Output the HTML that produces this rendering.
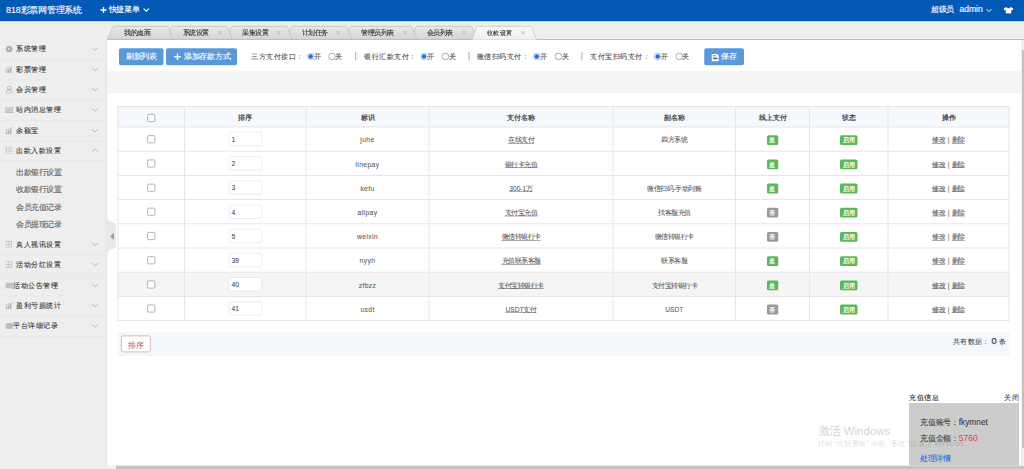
<!DOCTYPE html>
<html><head><meta charset="utf-8">
<style>
*{margin:0;padding:0;box-sizing:border-box}
html,body{width:4096px;height:1876px;overflow:hidden;background:#eeeeee;font-family:"Liberation Sans",sans-serif;color:#333;-webkit-text-stroke-width:0.48px}
.a{position:absolute;white-space:nowrap}
#hdr{left:0;top:0;width:4096px;height:84.8px;background:#0459b6;border-bottom:3.2px solid #034da2}
#hdrline{left:0;top:84.8px;width:4096px;height:8px;background:#e3f2fb}
.htxt{color:#fff}
#side{left:0;top:88px;width:428px;height:1788px;background:#eeeeee}
.sep2{left:0;width:416px;height:4px;background:#e8e8e8}
.sl{left:64px;font-size:29.8px;color:#3a3a3a;line-height:32px}
.sub{left:64px;font-size:30.2px;color:#666;line-height:32px}
#content{left:430.4px;top:160px;width:3653.6px;height:1704px;background:#fff}
#sstrip{left:418px;top:160px;width:12.4px;height:1704px;background:linear-gradient(90deg,#eee,#e6e6e6)}
.btn{background:#5a98dc;color:#fff;border-radius:8px;font-size:30.8px;line-height:68px;text-align:center}
.lbl{font-size:29.6px;color:#555;line-height:32px}
.radio{width:26.8px;height:26.8px;border-radius:50%;border:2.8px solid #888;background:#fff}
.radio.on{border:3.2px solid #5aa0f0;background:radial-gradient(circle,#1a73e0 0 58%,#fff 64%)}
.sep{width:5.2px;height:34px;background:#bbb}
#band{left:430px;top:284px;width:3656px;height:86px;background:#f5f5f5;border-bottom:3.2px solid #ededed}
table{position:absolute;left:470px;top:424px;border-collapse:collapse;table-layout:fixed;width:3564px}
td,th{border:4px solid #e6e6e6;text-align:center;font-size:26.4px;color:#555;font-weight:normal;padding:0}
td.tx{padding-top:8px}
th{height:82px;background:#f5f9fd;color:#333;font-weight:normal;font-size:27.6px;padding-top:8px;-webkit-text-stroke-width:0.8px}
td{-webkit-text-stroke-width:0.2px}
td{height:96.8px}
tr.hov td{background:#f5f5f5}
.cb{display:inline-block;width:32px;height:32px;border:3.2px solid #9a9a9a;border-radius:6px;background:#fff;vertical-align:middle}
.inp{display:inline-block;width:132px;height:56px;border:2.8px solid #dcdcdc;border-radius:6px;text-align:left;padding-left:8.8px;padding-top:3.2px;line-height:50px;font-size:27.2px;background:#fff;color:#444;vertical-align:middle}
.u{text-decoration:underline;color:#555;text-decoration-thickness:2.4px;text-underline-offset:4px}
.pipe{margin:0 10px;color:#555}
.bg{display:inline-block;background:#5cb85c;color:#fff;font-size:24.8px;-webkit-text-stroke-width:0.8px;line-height:39.2px;height:39.2px;border-radius:6px;padding:0 10px;vertical-align:middle}
.bg.no{background:#999}
#pg{left:472px;top:1328px;width:3566px;height:96px;background:#f3f8fc}
.tabt{font-size:26px;color:#333;line-height:28px}
.tabx{font-size:28px;color:#b8b8b8;line-height:28px}

td.lat{letter-spacing:1.4px;font-size:27.2px}

#root{position:absolute;left:0;top:0;width:4096px;height:1876px;transform:scale(0.25);transform-origin:0 0;overflow:hidden}
html,body{width:1024px!important;height:469px!important}
</style></head><body><div id="root">
<div class="a" id="hdr"></div>
<div class="a" id="hdrline"></div>
<div class="a htxt" style="left:24px;top:20px;font-size:35.2px;line-height:40px">818彩票网管理系统</div>
<svg class="a" style="left:400px;top:26px" width="28" height="28" viewBox="0 0 7 7"><path d="M3.5 0.5v6M0.5 3.5h6" stroke="#fff" stroke-width="1.4"/></svg>
<div class="a htxt" style="left:434.4px;top:19.2px;font-size:31.2px;line-height:36px">快捷菜单</div>
<svg class="a" style="left:572px;top:32px" width="26" height="16" viewBox="0 0 6.5 4"><path d="M0.6 0.6L3.25 3.2L5.9 0.6" fill="none" stroke="#fff" stroke-width="1.2"/></svg>
<div class="a htxt" style="left:3724px;top:20.8px;font-size:30px;line-height:36px">超级员</div>
<div class="a htxt" style="left:3838px;top:17.2px;font-size:34px;line-height:40px">admin</div>
<svg class="a" style="left:3944px;top:34px" width="24" height="16" viewBox="0 0 6 4"><path d="M0.5 0.5L3 3.2L5.5 0.5" fill="none" stroke="#fff" stroke-width="0.9"/></svg>
<svg class="a" style="left:4014px;top:27.2px" width="40" height="28" viewBox="0 0 10 7"><path d="M3 0.3L0.2 1.8L1 3.6L2.2 3.2V6.8H7.8V3.2L9 3.6L9.8 1.8L7 0.3C6.6 1.2 5.8 1.5 5 1.5C4.2 1.5 3.4 1.2 3 0.3Z" fill="#fff"/></svg>
<div class="a" id="side"></div>
<svg class="a" style="left:0;top:88px" width="4096" height="72" viewBox="0 0 1024 18">
<defs><linearGradient id="tg" x1="0" y1="0" x2="0" y2="1"><stop offset="0" stop-color="#e9e9e9"/><stop offset="1" stop-color="#d4d4d4"/></linearGradient>
<linearGradient id="ta" x1="0" y1="0" x2="0" y2="1"><stop offset="0" stop-color="#f7f7f7"/><stop offset="1" stop-color="#f0f0f0"/></linearGradient></defs>
<line x1="107" y1="17.5" x2="1024" y2="17.5" stroke="#bdbdbd" stroke-width="1"/>
<path d="M411 17.5L415.7 5.7Q416 4.3 417.5 4.3H470.5Q471.8 4.3 472.2 5.7L477 17.5Z" fill="url(#tg)" stroke="#bcbcbc" stroke-width="0.7"/>
<path d="M345 17.5L350 5.7Q350.3 4.3 351.8 4.3H410.5Q411.8 4.3 412.2 5.7L417 17.5Z" fill="url(#tg)" stroke="#bcbcbc" stroke-width="0.7"/>
<path d="M286 17.5L291 5.7Q291.3 4.3 292.8 4.3H345.5Q346.8 4.3 347.2 5.7L352 17.5Z" fill="url(#tg)" stroke="#bcbcbc" stroke-width="0.7"/>
<path d="M226 17.5L231 5.7Q231.3 4.3 232.8 4.3H286Q287.3 4.3 287.7 5.7L292.2 17.5Z" fill="url(#tg)" stroke="#bcbcbc" stroke-width="0.7"/>
<path d="M166 17.5L171 5.7Q171.3 4.3 172.8 4.3H226Q227.3 4.3 227.7 5.7L232.4 17.5Z" fill="url(#tg)" stroke="#bcbcbc" stroke-width="0.7"/>
<path d="M107.5 17.5L112.5 5.7Q112.8 4.3 114.3 4.3H167Q168.3 4.3 168.7 5.7L173 17.5Z" fill="url(#tg)" stroke="#bcbcbc" stroke-width="0.7"/>
<path d="M472 18L476.2 5.7Q476.5 4.3 478 4.3H530.3Q531.6 4.3 532 5.7L536.7 18Z" fill="url(#ta)" stroke="#c4c4c4" stroke-width="0.7"/>
</svg>
<div class="a tabt" style="left:496px;top:118px">我的桌面</div>
<div class="a tabt" style="left:730.4px;top:118px">系统设置</div><div class="a tabx" style="left:870px;top:116px">×</div>
<div class="a tabt" style="left:968px;top:118px">采集设置</div><div class="a tabx" style="left:1106px;top:116px">×</div>
<div class="a tabt" style="left:1206.4px;top:118px">计划任务</div><div class="a tabx" style="left:1344px;top:116px">×</div>
<div class="a tabt" style="left:1444px;top:118px">管理员列表</div><div class="a tabx" style="left:1612px;top:116px">×</div>
<div class="a tabt" style="left:1706.8px;top:118px">会员列表</div><div class="a tabx" style="left:1848px;top:116px">×</div>
<div class="a tabt" style="left:1948px;top:118.4px;color:#333;font-size:25.2px">收款设置</div><div class="a tabx" style="left:2083.2px;top:116px;color:#aaa;-webkit-text-stroke-width:0">×</div>
<div class="a sep2" style="top:236px"></div><svg class="a" style="left:22.4px;top:181.6px" width="28.8" height="28.8" viewBox="0 0 8 8"><g fill="#a8a8a8"><circle cx="4" cy="4" r="2.7"/><rect x="3.2" y="0" width="1.6" height="8"/><rect x="0" y="3.2" width="8" height="1.6"/><rect x="3.2" y="0" width="1.6" height="8" transform="rotate(45 4 4)"/><rect x="3.2" y="0" width="1.6" height="8" transform="rotate(-45 4 4)"/></g><circle cx="4" cy="4" r="1.1" fill="#eee"/></svg><div class="a sl" style="left:64px;top:178.8px">系统管理</div><svg class="a" style="left:366.4px;top:188px" width="28" height="16" viewBox="0 0 7 4"><path d="M0.6 0.6L3.5 3.3L6.4 0.6" fill="none" stroke="#aaa" stroke-width="0.85"/></svg><div class="a sep2" style="top:318px"></div><svg class="a" style="left:22.4px;top:262.8px" width="29.6" height="29.6" viewBox="0 0 8 8"><g fill="#b0b0b0"><rect x="0.3" y="5" width="1.6" height="3"/><rect x="2.5" y="3.8" width="1.6" height="4.2"/><rect x="4.7" y="2.6" width="1.6" height="5.4"/></g><path d="M0.5 4L3.5 2L5 3L7.6 0.4" fill="none" stroke="#a0a0a0" stroke-width="0.7"/></svg><div class="a sl" style="left:64px;top:260.8px">彩票管理</div><svg class="a" style="left:366.4px;top:270px" width="28" height="16" viewBox="0 0 7 4"><path d="M0.6 0.6L3.5 3.3L6.4 0.6" fill="none" stroke="#aaa" stroke-width="0.85"/></svg><div class="a sep2" style="top:398.4px"></div><svg class="a" style="left:23.2px;top:342.4px" width="28" height="32" viewBox="0 0 7 8"><circle cx="3.5" cy="2.4" r="1.9" fill="none" stroke="#a8a8a8" stroke-width="0.75"/><path d="M0.5 7.6v-1.3c0-1.1 1.3-1.9 3-1.9s3 0.8 3 1.9v1.3z" fill="none" stroke="#a8a8a8" stroke-width="0.75"/></svg><div class="a sl" style="left:64px;top:341.2px">会员管理</div><svg class="a" style="left:366.4px;top:350.4px" width="28" height="16" viewBox="0 0 7 4"><path d="M0.6 0.6L3.5 3.3L6.4 0.6" fill="none" stroke="#aaa" stroke-width="0.85"/></svg><div class="a sep2" style="top:480px"></div><svg class="a" style="left:21.2px;top:428.8px" width="32" height="23.2" viewBox="0 0 8 5.8"><rect x="0.35" y="0.35" width="7.3" height="5.1" fill="#d6d6d6" stroke="#a8a8a8" stroke-width="0.7"/><path d="M1.8 2.3h4.4M1.8 3.6h3" stroke="#a8a8a8" stroke-width="0.5"/></svg><div class="a sl" style="left:64px;top:422.8px">站内消息管理</div><svg class="a" style="left:366.4px;top:432px" width="28" height="16" viewBox="0 0 7 4"><path d="M0.6 0.6L3.5 3.3L6.4 0.6" fill="none" stroke="#aaa" stroke-width="0.85"/></svg><div class="a sep2" style="top:563.2px"></div><svg class="a" style="left:22.4px;top:508px" width="29.6" height="29.6" viewBox="0 0 8 8"><g fill="#b0b0b0"><rect x="0.3" y="5" width="1.6" height="3"/><rect x="2.5" y="3.8" width="1.6" height="4.2"/><rect x="4.7" y="2.6" width="1.6" height="5.4"/></g><path d="M0.5 4L3.5 2L5 3L7.6 0.4" fill="none" stroke="#a0a0a0" stroke-width="0.7"/></svg><div class="a sl" style="left:64px;top:506px">余额宝</div><svg class="a" style="left:366.4px;top:515.2px" width="28" height="16" viewBox="0 0 7 4"><path d="M0.6 0.6L3.5 3.3L6.4 0.6" fill="none" stroke="#aaa" stroke-width="0.85"/></svg><div class="a sep2" style="top:640.8px"></div><svg class="a" style="left:22.4px;top:585.6px" width="29.6" height="30.4" viewBox="0 0 7.4 7.6"><path d="M0.6 0v7.6" stroke="#a8a8a8" stroke-width="0.8"/><path d="M2.2 0.8h5M2.2 2.8h5M2.2 4.8h5M2.2 6.8h5" stroke="#b4b4b4" stroke-width="0.6"/></svg><div class="a sl" style="left:64px;top:583.6px">出款入款设置</div><svg class="a" style="left:366.4px;top:592.8px" width="28" height="16" viewBox="0 0 7 4"><path d="M0.6 3.4L3.5 0.7L6.4 3.4" fill="none" stroke="#aaa" stroke-width="0.85"/></svg><div class="a sep2" style="top:1016.8px"></div><svg class="a" style="left:22.4px;top:963.6px" width="26.4" height="26.4" viewBox="0 0 7 7"><rect x="0.4" y="0.4" width="6.2" height="6.2" fill="none" stroke="#b4b4b4" stroke-width="0.7"/><path d="M0.4 3.5h6.2M3.5 0.4v6.2" stroke="#b4b4b4" stroke-width="0.6"/></svg><div class="a sl" style="left:64px;top:959.6px">真人视讯设置</div><svg class="a" style="left:366.4px;top:968.8px" width="28" height="16" viewBox="0 0 7 4"><path d="M0.6 0.6L3.5 3.3L6.4 0.6" fill="none" stroke="#aaa" stroke-width="0.85"/></svg><div class="a sep2" style="top:1098.4px"></div><svg class="a" style="left:22.4px;top:1045.2px" width="26.4" height="26.4" viewBox="0 0 7 7"><rect x="0.4" y="0.4" width="6.2" height="6.2" fill="none" stroke="#b4b4b4" stroke-width="0.7"/><path d="M0.4 3.5h6.2M3.5 0.4v6.2" stroke="#b4b4b4" stroke-width="0.6"/></svg><div class="a sl" style="left:64px;top:1041.2px">活动分红设置</div><svg class="a" style="left:366.4px;top:1050.4px" width="28" height="16" viewBox="0 0 7 4"><path d="M0.6 0.6L3.5 3.3L6.4 0.6" fill="none" stroke="#aaa" stroke-width="0.85"/></svg><div class="a sep2" style="top:1182.4px"></div><svg class="a" style="left:22.4px;top:1130.4px" width="30.4" height="24" viewBox="0 0 7.6 6"><rect x="0" y="0" width="7.6" height="6" fill="#c4c4c4"/><path d="M0 2h7.6M0 4h7.6" stroke="#b0b0b0" stroke-width="0.5"/></svg><div class="a sl" style="left:53.2px;top:1125.2px">活动公告管理</div><svg class="a" style="left:366.4px;top:1134.4px" width="28" height="16" viewBox="0 0 7 4"><path d="M0.6 0.6L3.5 3.3L6.4 0.6" fill="none" stroke="#aaa" stroke-width="0.85"/></svg><div class="a sep2" style="top:1262.4px"></div><svg class="a" style="left:22.4px;top:1207.2px" width="29.6" height="29.6" viewBox="0 0 8 8"><g fill="#b0b0b0"><rect x="0.3" y="5" width="1.6" height="3"/><rect x="2.5" y="3.8" width="1.6" height="4.2"/><rect x="4.7" y="2.6" width="1.6" height="5.4"/></g><path d="M0.5 4L3.5 2L5 3L7.6 0.4" fill="none" stroke="#a0a0a0" stroke-width="0.7"/></svg><div class="a sl" style="left:64px;top:1205.2px">盈利亏损统计</div><svg class="a" style="left:366.4px;top:1214.4px" width="28" height="16" viewBox="0 0 7 4"><path d="M0.6 0.6L3.5 3.3L6.4 0.6" fill="none" stroke="#aaa" stroke-width="0.85"/></svg><div class="a sep2" style="top:1344px"></div><svg class="a" style="left:22.4px;top:1292px" width="30.4" height="24" viewBox="0 0 7.6 6"><rect x="0" y="0" width="7.6" height="6" fill="#c4c4c4"/><path d="M0 2h7.6M0 4h7.6" stroke="#b0b0b0" stroke-width="0.5"/></svg><div class="a sl" style="left:53.2px;top:1286.8px">平台详细记录</div><svg class="a" style="left:366.4px;top:1296px" width="28" height="16" viewBox="0 0 7 4"><path d="M0.6 0.6L3.5 3.3L6.4 0.6" fill="none" stroke="#aaa" stroke-width="0.85"/></svg><div class="a sub" style="top:672.8px">出款银行设置</div><div class="a sub" style="top:743.2px">收款银行设置</div><div class="a sub" style="top:812.8px">会员充值记录</div><div class="a sub" style="top:880.8px">会员提现记录</div><div class="a" id="sstrip"></div><div class="a" id="content"></div>
<div class="a btn" style="left:476px;top:193.2px;width:178.4px;height:68px">刷新列表</div>
<div class="a btn" style="left:664px;top:193.2px;width:284px;height:68px"></div>
<svg class="a" style="left:696px;top:213.2px" width="28" height="28" viewBox="0 0 7 7"><path d="M3.5 0.3v6.4M0.3 3.5h6.4" stroke="#fff" stroke-width="1.3"/></svg>
<div class="a btn" style="left:735.2px;top:193.2px;height:68px;background:none">添加存款方式</div>
<div class="a lbl" style="left:1004px;top:208.4px">三方支付接口：</div>
<svg class="a" style="left:1228px;top:211.2px" width="29.6" height="29.6" viewBox="0 0 7 7"><circle cx="3.5" cy="3.5" r="3.15" fill="#fff" stroke="#7fb6f2" stroke-width="0.7"/><circle cx="3.5" cy="3.5" r="2.1" fill="#1a70dc"/></svg>
<div class="a lbl" style="left:1254.8px;top:208.4px">开</div>
<svg class="a" style="left:1312.8px;top:211.2px" width="29.6" height="29.6" viewBox="0 0 7 7"><circle cx="3.5" cy="3.5" r="3.15" fill="#fff" stroke="#8a8a8a" stroke-width="0.7"/></svg>
<div class="a lbl" style="left:1340.8px;top:208.4px">关</div>
<div class="a sep" style="left:1420px;top:208px"></div>
<div class="a lbl" style="left:1456px;top:208.4px">银行汇款支付：</div>
<svg class="a" style="left:1681.2px;top:211.2px" width="29.6" height="29.6" viewBox="0 0 7 7"><circle cx="3.5" cy="3.5" r="3.15" fill="#fff" stroke="#7fb6f2" stroke-width="0.7"/><circle cx="3.5" cy="3.5" r="2.1" fill="#1a70dc"/></svg>
<div class="a lbl" style="left:1708px;top:208.4px">开</div>
<svg class="a" style="left:1767.2px;top:211.2px" width="29.6" height="29.6" viewBox="0 0 7 7"><circle cx="3.5" cy="3.5" r="3.15" fill="#fff" stroke="#8a8a8a" stroke-width="0.7"/></svg>
<div class="a lbl" style="left:1796px;top:208.4px">关</div>
<div class="a sep" style="left:1874px;top:208px"></div>
<div class="a lbl" style="left:1906.4px;top:208.4px">微信扫码支付：</div>
<svg class="a" style="left:2132px;top:211.2px" width="29.6" height="29.6" viewBox="0 0 7 7"><circle cx="3.5" cy="3.5" r="3.15" fill="#fff" stroke="#7fb6f2" stroke-width="0.7"/><circle cx="3.5" cy="3.5" r="2.1" fill="#1a70dc"/></svg>
<div class="a lbl" style="left:2158.8px;top:208.4px">开</div>
<svg class="a" style="left:2219.2px;top:211.2px" width="29.6" height="29.6" viewBox="0 0 7 7"><circle cx="3.5" cy="3.5" r="3.15" fill="#fff" stroke="#8a8a8a" stroke-width="0.7"/></svg>
<div class="a lbl" style="left:2248px;top:208.4px">关</div>
<div class="a sep" style="left:2324.8px;top:208px"></div>
<div class="a lbl" style="left:2360px;top:208.4px">支付宝扫码支付：</div>
<svg class="a" style="left:2616px;top:211.2px" width="29.6" height="29.6" viewBox="0 0 7 7"><circle cx="3.5" cy="3.5" r="3.15" fill="#fff" stroke="#7fb6f2" stroke-width="0.7"/><circle cx="3.5" cy="3.5" r="2.1" fill="#1a70dc"/></svg>
<div class="a lbl" style="left:2642.4px;top:208.4px">开</div>
<svg class="a" style="left:2702px;top:211.2px" width="29.6" height="29.6" viewBox="0 0 7 7"><circle cx="3.5" cy="3.5" r="3.15" fill="#fff" stroke="#8a8a8a" stroke-width="0.7"/></svg>
<div class="a lbl" style="left:2726.8px;top:208.4px">关</div>
<div class="a btn" style="left:2817.2px;top:193.2px;width:158.8px;height:68px"></div>
<svg class="a" style="left:2845.6px;top:216px" width="29.6" height="29.6" viewBox="0 0 7.4 7.4"><path d="M0.6 0H5.6L7.4 1.8V6.8Q7.4 7.4 6.8 7.4H0.6Q0 7.4 0 6.8V0.6Q0 0 0.6 0Z" fill="#fff"/><rect x="1.4" y="1.2" width="3.2" height="1.1" fill="#5a98dc"/><rect x="1.4" y="3.6" width="4.6" height="1.6" fill="#3f6fa8"/></svg>
<div class="a btn" style="left:2884.8px;top:193.2px;height:68px;background:none">保存</div>
<div class="a" id="band"></div>
<table><colgroup><col style="width:266px"><col style="width:486px"><col style="width:492px"><col style="width:736px"><col style="width:490px"><col style="width:296px"><col style="width:314px"><col style="width:484px"></colgroup>
<tr><th><span class="cb"></span></th><th>排序</th><th>标识</th><th>支付名称</th><th>副名称</th><th>线上支付</th><th>状态</th><th>操作</th></tr>
<tr><td><span class="cb"></span></td><td><span class="inp">1</span></td><td class="tx lat">juhe</td><td class="tx"><span class="u">在线支付</span></td><td class="tx">四方系统</td><td class="tx"><span class="bg">是</span></td><td class="tx"><span class="bg">启用</span></td><td class="tx"><span class="u">修改</span><span class="pipe">|</span><span class="u">删除</span></td></tr>
<tr><td><span class="cb"></span></td><td><span class="inp">2</span></td><td class="tx lat">linepay</td><td class="tx"><span class="u">银行卡充值</span></td><td class="tx"></td><td class="tx"><span class="bg">是</span></td><td class="tx"><span class="bg">启用</span></td><td class="tx"><span class="u">修改</span><span class="pipe">|</span><span class="u">删除</span></td></tr>
<tr><td><span class="cb"></span></td><td><span class="inp">3</span></td><td class="tx lat">kefu</td><td class="tx"><span class="u">300-1万</span></td><td class="tx">微信扫码-手动到账</td><td class="tx"><span class="bg">是</span></td><td class="tx"><span class="bg">启用</span></td><td class="tx"><span class="u">修改</span><span class="pipe">|</span><span class="u">删除</span></td></tr>
<tr><td><span class="cb"></span></td><td><span class="inp">4</span></td><td class="tx lat">alipay</td><td class="tx"><span class="u">支付宝充值</span></td><td class="tx">找客服充值</td><td class="tx"><span class="bg no">否</span></td><td class="tx"><span class="bg">启用</span></td><td class="tx"><span class="u">修改</span><span class="pipe">|</span><span class="u">删除</span></td></tr>
<tr><td><span class="cb"></span></td><td><span class="inp">5</span></td><td class="tx lat">weixin</td><td class="tx"><span class="u">微信转银行卡</span></td><td class="tx">微信转银行卡</td><td class="tx"><span class="bg no">否</span></td><td class="tx"><span class="bg">启用</span></td><td class="tx"><span class="u">修改</span><span class="pipe">|</span><span class="u">删除</span></td></tr>
<tr><td><span class="cb"></span></td><td><span class="inp">39</span></td><td class="tx lat">nyyh</td><td class="tx"><span class="u">充值联系客服</span></td><td class="tx">联系客服</td><td class="tx"><span class="bg">是</span></td><td class="tx"><span class="bg">启用</span></td><td class="tx"><span class="u">修改</span><span class="pipe">|</span><span class="u">删除</span></td></tr>
<tr class="hov"><td><span class="cb"></span></td><td><span class="inp">40</span></td><td class="tx lat">zfbzz</td><td class="tx"><span class="u">支付宝转银行卡</span></td><td class="tx">支付宝转银行卡</td><td class="tx"><span class="bg">是</span></td><td class="tx"><span class="bg">启用</span></td><td class="tx"><span class="u">修改</span><span class="pipe">|</span><span class="u">删除</span></td></tr>
<tr><td><span class="cb"></span></td><td><span class="inp">41</span></td><td class="tx lat">usdt</td><td class="tx"><span class="u">USDT支付</span></td><td class="tx">USDT</td><td class="tx"><span class="bg no">否</span></td><td class="tx"><span class="bg">启用</span></td><td class="tx"><span class="u">修改</span><span class="pipe">|</span><span class="u">删除</span></td></tr>
</table>
<div class="a" id="pg"></div>
<div class="a" style="left:484px;top:1342px;width:118.8px;height:67.2px;border:3.6px solid #cfa2a7;border-radius:8.8px;background:#fff;color:#c9646c;font-size:30.4px;line-height:60px;padding-top:6.4px;text-align:center;-webkit-text-stroke-width:0.32px">排序</div>
<div class="a" style="left:3812px;top:1346.4px;font-size:29px;color:#444;line-height:32px;-webkit-text-stroke-width:0.2px">共有数据：<span style="font-size:36.8px;color:#333;margin-left:8.8px;-webkit-text-stroke-width:1px">0</span><span style="margin-left:10.4px">条</span></div>
<svg class="a" style="left:426px;top:878px" width="40" height="132" viewBox="0 0 10 33"><path d="M0 0L9.3 4V28L0 32Z" fill="#e8e8e8"/><path d="M7.5 13.5L3.6 17L7.5 20.5Z" fill="#999"/></svg>
<div class="a" style="left:3636px;top:1574px;font-size:29.6px;color:#333;line-height:32px">充值信息</div>
<div class="a" style="left:4016px;top:1574px;font-size:29.6px;color:#555;line-height:32px">关闭</div>
<div class="a" style="left:3636px;top:1612px;width:440px;height:264px;background:#cccccc"></div>
<div class="a" style="left:3680px;top:1674px;font-size:31.2px;color:#333;line-height:32px;-webkit-text-stroke-width:0.2px">充值账号：<span style="font-size:33.2px">fkymnet</span></div>
<div class="a" style="left:3680px;top:1736px;font-size:31.2px;color:#333;line-height:32px;-webkit-text-stroke-width:0.2px">充值金额：<span style="color:#e5464c;font-size:34.4px">5760</span></div>
<div class="a" style="left:3680px;top:1818px;font-size:30.4px;color:#1e78d8;line-height:32px">处理详情</div>
<div class="a" style="left:4084px;top:160px;width:12px;height:1704px;background:#f1f1f1"></div>
<div class="a" style="left:4088px;top:200px;width:8px;height:1592px;background:#c1c1c1"></div>
<div class="a" style="left:428px;top:1862px;width:3668px;height:14px;background:#f1f1f1"></div>
<div class="a" style="left:464px;top:1863.2px;width:3632px;height:12.8px;background:#c4c4c4"></div>
<div class="a" style="left:3270px;top:1698px;font-size:46px;color:rgba(0,0,0,0.21);line-height:48px;-webkit-text-stroke-width:0">激活 Windows</div>
<div class="a" style="left:3270px;top:1758px;font-size:29.2px;color:rgba(0,0,0,0.19);line-height:32px;-webkit-text-stroke-width:0">转到<span style="display:inline-block;width:0.7em;text-align:right">“</span>控制面板<span style="display:inline-block;width:0.7em;text-align:left">”</span>中的<span style="display:inline-block;width:0.7em;text-align:right">“</span>系统<span style="display:inline-block;width:0.7em;text-align:left">”</span>以激活 Windows。</div>
</div></body></html>
